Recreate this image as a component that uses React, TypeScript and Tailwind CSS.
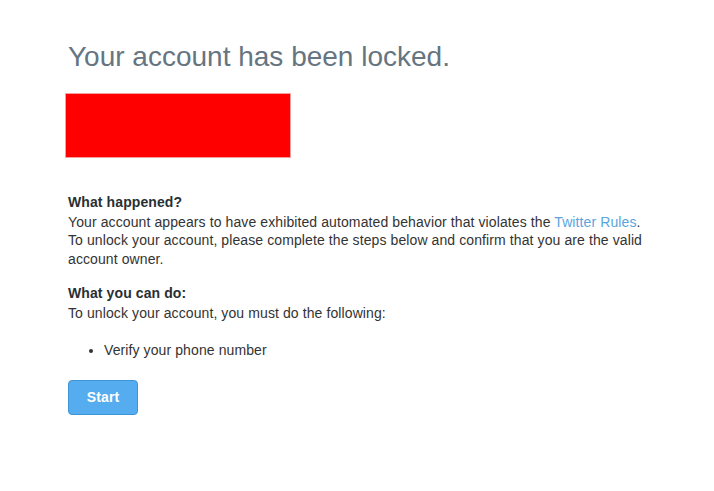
export default function App() {
  return (
    <div
      className="min-h-[491px] w-full bg-white text-[#333333]"
      style={{ fontFamily: '"Liberation Sans", Arial, sans-serif' }}
    >
      <div className="pl-[68px] pt-[40px]">
        <h1 className="text-[28px] leading-[34px] font-normal text-[#66757f]">
          Your account has been locked.
        </h1>
        <div className="ml-[-3px] mt-[19px] h-[65px] w-[226px] bg-[#ff0000] border border-[#f3a0a0]" />
        <div className="mt-[35px] w-[584px] text-[14px] leading-[18.5px] tracking-[0.1px]">
          <p className="font-bold text-[#292f33]">What happened?</p>
          <p className="mt-[1px]">
            Your account appears to have exhibited automated behavior that violates the{" "}
            <span className="text-[#5aa5dd]">Twitter Rules</span>. To unlock your account, please complete the steps below and confirm that you are the valid account owner.
          </p>
          <p className="mt-[16px] font-bold text-[#292f33]">What you can do:</p>
          <p className="mt-[1px]">To unlock your account, you must do the following:</p>
          <ul className="mt-[19px] list-disc pl-[36px]">
            <li>Verify your phone number</li>
          </ul>
          <button className="mt-[20px] h-[35px] w-[70px] rounded-[4px] border border-[#3d95d6] bg-[#55acee] text-[14px] font-bold text-white">
            Start
          </button>
        </div>
      </div>
    </div>
  );
}
